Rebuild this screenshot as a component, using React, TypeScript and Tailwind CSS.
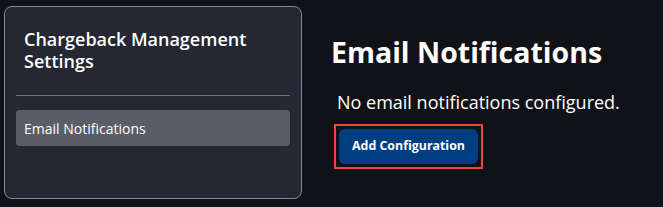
export default function App() {
    return (
        <div
            className="flex min-h-[207px] w-full items-start bg-[#111217] pl-[4px] pt-[6px] text-white"
            style={{ fontFamily: '"Open Sans", "Noto Sans", sans-serif' }}
        >
            <aside className="flex h-[193px] w-[298px] flex-shrink-0 flex-col rounded-lg border border-[#7f88a1] bg-[#252833] px-[11px] pt-[12px]">
                <h2 className="px-2 pb-[23px] pt-[9px] text-[18px] font-semibold leading-[22px]">
                    Chargeback Management Settings
                </h2>
                <div className="h-px bg-[#6b7285]" />
                <button className="mt-[14px] flex h-[36px] w-full items-center rounded bg-[#5a5c66] px-2 text-left text-[14px] text-white">
                    Email Notifications
                </button>
            </aside>
            <main className="flex flex-col items-start pl-[29px] pt-[28px]">
                <h1 className="text-[28.5px] font-bold leading-[36px]">
                    Email Notifications
                </h1>
                <p className="ml-[6px] mt-[18px] text-[18px] leading-[28px]">
                    No email notifications configured.
                </p>
                <div className="ml-[3px] mt-[8px] border-2 border-[#ef4444] p-[3px]">
                    <button className="h-[35px] rounded-md bg-[#003e80] px-[13px] text-[12.4px] font-bold text-white">
                        Add Configuration
                    </button>
                </div>
            </main>
        </div>
    );
}
